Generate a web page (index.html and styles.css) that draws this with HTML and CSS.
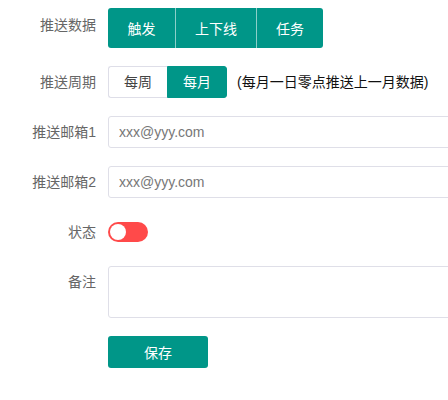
FILE: index.html
```html
<!DOCTYPE html>
<html>
<head>
  <meta charset="UTF-8">
  <title>推送设置</title>
  <link rel="stylesheet" href="styles.css">
</head>
<body>
  <form class="form">
    <div class="form-item">
      <label class="form-label label-tall">推送数据</label>
      <div class="btn-group">
        <button type="button" class="btn">触发</button>
        <button type="button" class="btn btn-wide">上下线</button>
        <button type="button" class="btn">任务</button>
      </div>
    </div>

    <div class="form-item">
      <label class="form-label">推送周期</label>
      <div class="radio-group">
        <span class="radio-btn">每周</span>
        <span class="radio-btn active">每月</span>
      </div>
      <span class="hint">(每月一日零点推送上一月数据)</span>
    </div>

    <div class="form-item">
      <label class="form-label">推送邮箱1</label>
      <div class="field">
        <input class="input" type="text" placeholder="xxx@yyy.com">
      </div>
    </div>

    <div class="form-item">
      <label class="form-label">推送邮箱2</label>
      <div class="field">
        <input class="input" type="text" placeholder="xxx@yyy.com">
      </div>
    </div>

    <div class="form-item">
      <label class="form-label">状态</label>
      <span class="switch"><i></i></span>
    </div>

    <div class="form-item">
      <label class="form-label">备注</label>
      <div class="field">
        <textarea class="input textarea"></textarea>
      </div>
    </div>

    <div class="form-item">
      <span class="form-label"></span>
      <button type="button" class="btn btn-save">保存</button>
    </div>
  </form>
</body>
</html>
```

FILE: styles.css
```css
html, body { overflow: hidden; }
body {
  margin: 0;
  padding: 8px 0 0 8px;
  font-family: "Liberation Sans", "Noto Sans CJK SC", sans-serif;
  font-size: 14px;
  color: #333;
  background: #fff;
}
.form {
  display: flex;
  flex-direction: column;
  gap: 18px;
}
.form-item {
  display: flex;
  align-items: flex-start;
  gap: 12px;
}
.form-label {
  width: 88px;
  flex: none;
  text-align: right;
  line-height: 32px;
  color: #666;
}
.label-tall { line-height: 34px; }

.btn {
  height: 40px;
  padding: 0;
  border: none;
  background: #009688;
  color: #fff;
  font-family: inherit;
  font-size: 14px;
  cursor: pointer;
}
.btn-group { display: flex; }
.btn-group .btn { width: 67px; box-sizing: border-box; }
.btn-group .btn-wide { width: 81px; }
.btn-group .btn:first-child { border-radius: 3px 0 0 3px; }
.btn-group .btn:last-child { border-radius: 0 3px 3px 0; }
.btn-group .btn + .btn { border-left: 1px solid rgba(255,255,255,0.55); }

.radio-group { display: flex; }
.radio-btn {
  height: 32px;
  line-height: 30px;
  border: 1px solid #dedee8;
  color: #444;
  box-sizing: border-box;
  width: 60px;
  text-align: center;
}
.radio-btn:first-child { border-radius: 3px 0 0 3px; border-right: none; width: 59px; }
.radio-btn:last-child { border-radius: 0 3px 3px 0; }
.radio-btn.active {
  background: #009688;
  border-color: #009688;
  color: #fff;
}
.hint {
  margin-left: -2px;
  line-height: 32px;
  color: #111;
}

.field {
  flex: 1;
  min-width: 0;
}
.input {
  display: block;
  width: 345px;
  height: 32px;
  box-sizing: border-box;
  padding: 0 10px;
  border: 1px solid #dfdfe8;
  border-radius: 3px;
  font-family: inherit;
  font-size: 14px;
  color: #333;
  outline: none;
}
.input::placeholder { color: #777; }
.textarea {
  height: 52px;
  resize: none;
  padding: 8px 10px;
}

.switch {
  margin-top: 6px;
  width: 40px;
  height: 20px;
  border-radius: 10px;
  background: #ff4a4a;
  display: flex;
  align-items: center;
  padding: 0 2px;
  box-sizing: border-box;
}
.switch i {
  width: 16px;
  height: 16px;
  border-radius: 50%;
  background: #fff;
}

.btn-save {
  width: 100px;
  height: 32px;
  border-radius: 3px;
}
```
